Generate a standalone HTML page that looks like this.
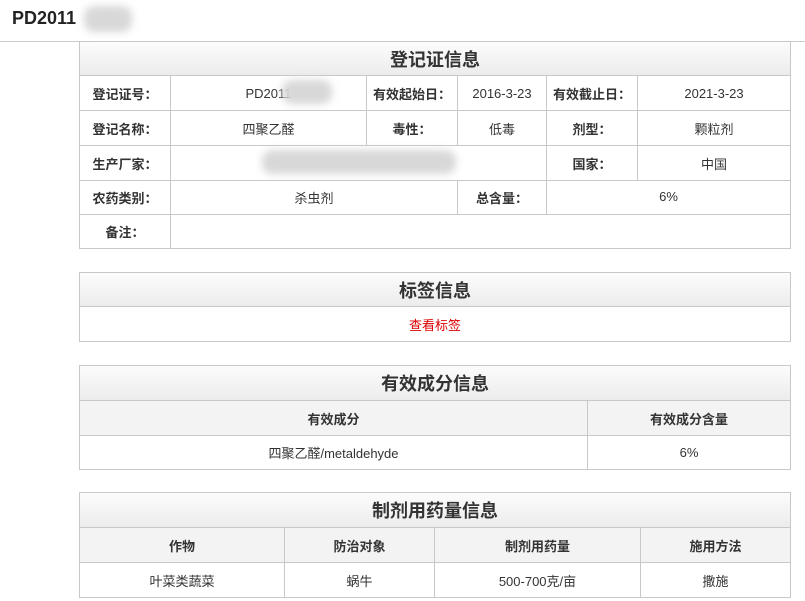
<!DOCTYPE html>
<html><head><meta charset="utf-8"><style>
*{margin:0;padding:0;box-sizing:border-box}
body{width:805px;height:601px;background:#fff;font-family:"Liberation Sans","Noto Sans CJK SC",sans-serif;font-size:13px;color:#333;position:relative;overflow:hidden}
.c{position:absolute;border:1px solid #c8c8c8;display:flex;align-items:center;justify-content:center;background:#fff}
.b{font-weight:bold}
.t{background:linear-gradient(#fcfcfc,#ececec);font-size:18px;font-weight:bold;color:#333}
.h{background:#f3f3f3;font-weight:bold}
.blur{position:absolute;background:#d8d8d8;border-radius:10px;filter:blur(4px)}
</style></head><body>
<div style="position:absolute;left:12px;top:8px;font-size:18px;font-weight:bold;color:#222">PD2011</div>
<div class="blur" style="left:84px;top:6px;width:48px;height:26px"></div>
<div style="position:absolute;left:0;top:41px;width:805px;height:1px;background:#ccc"></div>

<!-- table1 -->
<div class="c t" style="left:79px;top:41px;width:712px;height:35px">登记证信息</div>
<div class="c b" style="left:79px;top:75px;width:92px;height:36px">登记证号：</div>
<div class="c" style="left:170px;top:75px;width:197px;height:36px">PD2011</div>
<div class="blur" style="left:282px;top:80px;width:50px;height:24px"></div>
<div class="c b" style="left:366px;top:75px;width:92px;height:36px">有效起始日：</div>
<div class="c" style="left:457px;top:75px;width:90px;height:36px">2016-3-23</div>
<div class="c b" style="left:546px;top:75px;width:92px;height:36px">有效截止日：</div>
<div class="c" style="left:637px;top:75px;width:154px;height:36px">2021-3-23</div>

<div class="c b" style="left:79px;top:110px;width:92px;height:36px">登记名称：</div>
<div class="c" style="left:170px;top:110px;width:197px;height:36px">四聚乙醛</div>
<div class="c b" style="left:366px;top:110px;width:92px;height:36px">毒性：</div>
<div class="c" style="left:457px;top:110px;width:90px;height:36px">低毒</div>
<div class="c b" style="left:546px;top:110px;width:92px;height:36px">剂型：</div>
<div class="c" style="left:637px;top:110px;width:154px;height:36px">颗粒剂</div>

<div class="c b" style="left:79px;top:145px;width:92px;height:36px">生产厂家：</div>
<div class="c" style="left:170px;top:145px;width:377px;height:36px"></div>
<div class="blur" style="left:262px;top:150px;width:194px;height:24px"></div>
<div class="c b" style="left:546px;top:145px;width:92px;height:36px">国家：</div>
<div class="c" style="left:637px;top:145px;width:154px;height:36px">中国</div>

<div class="c b" style="left:79px;top:180px;width:92px;height:35px">农药类别：</div>
<div class="c" style="left:170px;top:180px;width:288px;height:35px">杀虫剂</div>
<div class="c b" style="left:457px;top:180px;width:90px;height:35px">总含量：</div>
<div class="c" style="left:546px;top:180px;width:245px;height:35px;align-items:flex-start;padding-top:8px">6%</div>

<div class="c b" style="left:79px;top:214px;width:92px;height:35px">备注：</div>
<div class="c" style="left:170px;top:214px;width:621px;height:35px"></div>

<!-- table2 -->
<div class="c t" style="left:79px;top:272px;width:712px;height:35px">标签信息</div>
<div class="c" style="left:79px;top:306px;width:712px;height:36px;color:#d00">查看标签</div>

<!-- table3 -->
<div class="c t" style="left:79px;top:365px;width:712px;height:36px">有效成分信息</div>
<div class="c h" style="left:79px;top:400px;width:509px;height:36px">有效成分</div>
<div class="c h" style="left:587px;top:400px;width:204px;height:36px">有效成分含量</div>
<div class="c" style="left:79px;top:435px;width:509px;height:35px">四聚乙醛/metaldehyde</div>
<div class="c" style="left:587px;top:435px;width:204px;height:35px">6%</div>

<!-- table4 -->
<div class="c t" style="left:79px;top:492px;width:712px;height:36px">制剂用药量信息</div>
<div class="c h" style="left:79px;top:527px;width:206px;height:36px">作物</div>
<div class="c h" style="left:284px;top:527px;width:151px;height:36px">防治对象</div>
<div class="c h" style="left:434px;top:527px;width:207px;height:36px">制剂用药量</div>
<div class="c h" style="left:640px;top:527px;width:151px;height:36px">施用方法</div>
<div class="c" style="left:79px;top:562px;width:206px;height:36px">叶菜类蔬菜</div>
<div class="c" style="left:284px;top:562px;width:151px;height:36px">蜗牛</div>
<div class="c" style="left:434px;top:562px;width:207px;height:36px">500-700克/亩</div>
<div class="c" style="left:640px;top:562px;width:151px;height:36px">撒施</div>
</body></html>
